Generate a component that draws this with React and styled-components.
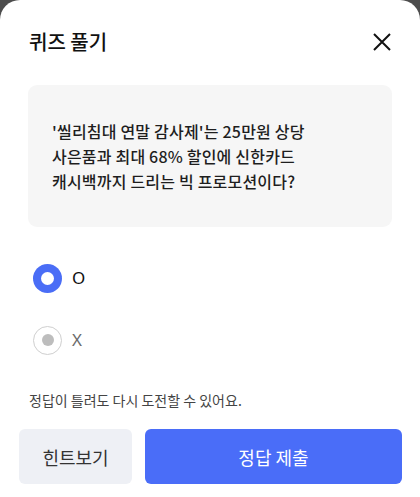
import React, { useState } from "react";
import styled, { createGlobalStyle, css } from "styled-components";

const Global = createGlobalStyle`
  html, body { margin: 0; padding: 0; background: #4d4d4d; }
  body { font-family: "Noto Sans CJK KR", "Noto Sans", sans-serif; -webkit-font-smoothing: antialiased; }
  * { box-sizing: border-box; }
`;

const Sheet = styled.div`
  width: 420px;
  height: 497px;
  background: #ffffff;
  border-radius: 20px 20px 0 0;
  padding: 30px 28px 0 29px;
  display: flex;
  flex-direction: column;
`;

const Header = styled.div`
  height: 24px;
  display: flex;
  align-items: center;
  justify-content: space-between;
`;

const Title = styled.h1`
  margin: 0;
  font-size: 20px;
  font-weight: 500;
  line-height: 24px;
  color: #111;
`;

const CloseButton = styled.button`
  width: 22px;
  height: 22px;
  padding: 0;
  margin-right: -1px;
  border: 0;
  background: none;
  display: flex;
  align-items: center;
  justify-content: center;
  cursor: pointer;
`;

const QuestionBox = styled.div`
  margin: 31px 0 0 -1px;
  height: 142px;
  background: #f6f6f6;
  border-radius: 9px;
  padding: 0 24px;
  display: flex;
  align-items: center;
`;

const QuestionText = styled.p`
  margin: 0;
  font-size: 16px;
  font-weight: 500;
  line-height: 25px;
  color: #1e1e1e;
  letter-spacing: 0.2px;
`;

const Options = styled.div`
  margin-top: 37px;
  display: flex;
  flex-direction: column;
  gap: 34px;
`;

const Option = styled.label`
  display: flex;
  align-items: center;
  gap: 10px;
  height: 28px;
  padding-left: 4px;
  cursor: pointer;
`;

const RadioCircle = styled.span`
  width: 29px;
  height: 29px;
  border-radius: 50%;
  display: flex;
  align-items: center;
  justify-content: center;
  ${(p) =>
    p.$checked
      ? css`
          background: #4a6df6;
          &::after {
            content: "";
            width: 13px;
            height: 13px;
            border-radius: 50%;
            background: #fff;
          }
        `
      : css`
          border: 1.5px solid #cfcfcf;
          &::after {
            content: "";
            width: 12px;
            height: 12px;
            border-radius: 50%;
            background: #bdbdbd;
          }
        `}
`;

const OptionLabel = styled.span`
  font-family: "Noto Sans", "Noto Sans CJK KR", sans-serif;
  font-size: 17px;
  line-height: 22px;
  color: ${(p) => (p.$checked ? "#111" : "#6b6b6b")};
`;

const Notice = styled.p`
  margin: 37px 0 0;
  font-size: 14px;
  line-height: 19px;
  color: #444;
`;

const ButtonRow = styled.div`
  margin: 19px -10px 0 -10px;
  display: flex;
  gap: 13px;
`;

const Button = styled.button`
  height: 55px;
  border: 0;
  border-radius: 6px;
  font-family: "Noto Sans CJK KR", sans-serif;
  font-size: 18px;
  font-weight: 400;
  cursor: pointer;
  ${(p) =>
    p.$primary
      ? css`
          flex: 1;
          background: #4a6df8;
          color: #fff;
        `
      : css`
          width: 113px;
          background: #eef0f5;
          color: #333;
        `}
`;

export default function App() {
  const [answer, setAnswer] = useState("O");
  return (
    <>
      <Global />
      <Sheet>
        <Header>
          <Title>퀴즈 풀기</Title>
          <CloseButton aria-label="닫기">
            <svg width="20" height="20" viewBox="0 0 20 20">
              <path d="M2 2 L18 18 M18 2 L2 18" stroke="#111" strokeWidth="2" strokeLinecap="butt" />
            </svg>
          </CloseButton>
        </Header>
        <QuestionBox>
          <QuestionText>
            '씰리침대 연말 감사제'는 25만원 상당
            <br />
            사은품과 최대 68% 할인에 신한카드
            <br />
            캐시백까지 드리는 빅 프로모션이다?
          </QuestionText>
        </QuestionBox>
        <Options>
          {["O", "X"].map((v) => (
            <Option key={v} onClick={() => setAnswer(v)}>
              <RadioCircle $checked={answer === v} />
              <OptionLabel $checked={answer === v}>{v}</OptionLabel>
            </Option>
          ))}
        </Options>
        <Notice>정답이 틀려도 다시 도전할 수 있어요.</Notice>
        <ButtonRow>
          <Button>힌트보기</Button>
          <Button $primary>정답 제출</Button>
        </ButtonRow>
      </Sheet>
    </>
  );
}
